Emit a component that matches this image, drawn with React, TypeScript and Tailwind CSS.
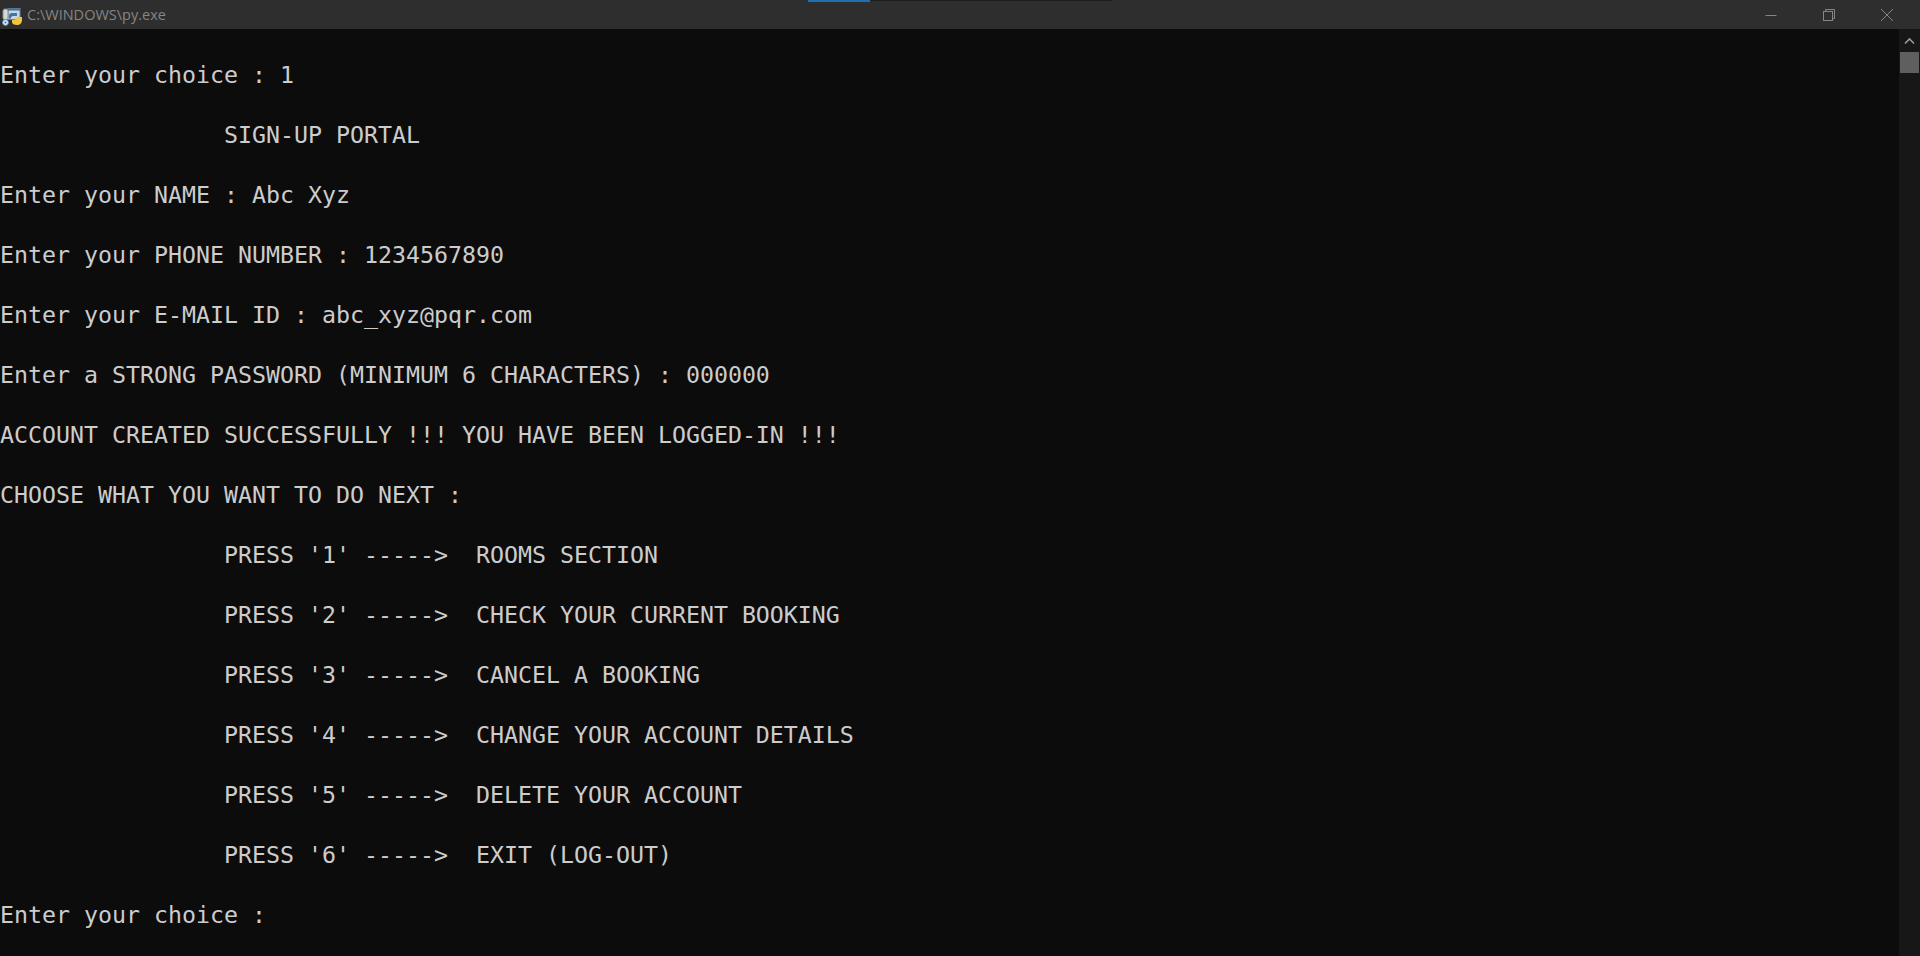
const LINES = [
  "Enter your choice : 1",
  "                SIGN-UP PORTAL",
  "Enter your NAME : Abc Xyz",
  "Enter your PHONE NUMBER : 1234567890",
  "Enter your E-MAIL ID : abc_xyz@pqr.com",
  "Enter a STRONG PASSWORD (MINIMUM 6 CHARACTERS) : 000000",
  "ACCOUNT CREATED SUCCESSFULLY !!! YOU HAVE BEEN LOGGED-IN !!!",
  "CHOOSE WHAT YOU WANT TO DO NEXT :",
  "                PRESS '1' ----->  ROOMS SECTION",
  "                PRESS '2' ----->  CHECK YOUR CURRENT BOOKING",
  "                PRESS '3' ----->  CANCEL A BOOKING",
  "                PRESS '4' ----->  CHANGE YOUR ACCOUNT DETAILS",
  "                PRESS '5' ----->  DELETE YOUR ACCOUNT",
  "                PRESS '6' ----->  EXIT (LOG-OUT)",
  "Enter your choice :",
];

function PyIcon() {
  return (
    <svg width="22" height="22" viewBox="0 0 22 22" className="shrink-0">
      {/* window behind the snake */}
      <rect x="7" y="4.5" width="12" height="11" fill="#c9d6e2" stroke="#6f8296" />
      <rect x="7" y="4.5" width="12" height="2" fill="#3f6f9e" />
      {/* disc / grey figure on the left */}
      <rect x="2" y="5" width="5" height="11" rx="2" fill="#d8d8d8" stroke="#8c8c8c" />
      <circle cx="4.5" cy="18.5" r="3" fill="#e6eef5" stroke="#4a82b0" />
      <circle cx="4.5" cy="18.5" r="1" fill="#2f6ea5" />
      {/* python logo */}
      <path d="M11 9h5v3h-4c-1.500 0-2 1-2 2.500H8V12c0-2 1-3 3-3z" fill="#3b77a8" />
      <path d="M16 13h5v3c0 3-2 5-5 5s-5-1-5-3v-2c2 0 3 0 4-1 .5-.8.5-1.500 1-2z" fill="#f2c53d" />
    </svg>
  );
}

function TitleBar() {
  return (
    <div className="h-[29px] shrink-0 bg-[#2e2e2e] flex items-center relative">
      <div className="flex items-center pl-[1px] gap-[4px] flex-1">
        <PyIcon />
        <span className="text-[#858585] text-[14.5px] font-['Open_Sans',sans-serif]">C:\WINDOWS\py.exe</span>
      </div>
      {/* window buttons */}
      <div className="flex items-center h-full pr-[4px] text-[#858585]">
        <div className="w-[58px] flex justify-center">
          <svg width="14" height="14" viewBox="0 0 14 14"><path d="M1.5 7.5h11" stroke="currentColor" /></svg>
        </div>
        <div className="w-[58px] flex justify-center">
          <svg width="14" height="14" viewBox="0 0 14 14" fill="none" stroke="currentColor"><rect x="1.500" y="3.500" width="9" height="9" /><path d="M3.500 3.500v-2h9v9h-2" /></svg>
        </div>
        <div className="w-[58px] flex justify-center">
          <svg width="14" height="14" viewBox="0 0 14 14" fill="none" stroke="currentColor"><path d="M1 1l12 12M13 1L1 13" /></svg>
        </div>
      </div>
      <div className="absolute top-0 left-[808px] w-[304px] h-px bg-[#1e1e1e]">
        <div className="w-[62px] h-[2px] bg-[#1f6fb5]" />
      </div>
    </div>
  );
}

function ScrollBar() {
  return (
    <div className="w-[21px] shrink-0 bg-[#171717] flex flex-col items-center">
      <div className="h-[23px] w-full flex justify-center items-center">
        <svg width="11" height="8" viewBox="0 0 11 8" fill="none"><path d="M1 6.500l4.500-4.500 4.500 4.500" stroke="#9a9a9a" strokeWidth="1.600" /></svg>
      </div>
      <div className="w-[19px] h-[21px] bg-[#5f5f5f]" />
    </div>
  );
}

export default function App() {
  return (
    <div className="h-[956px] w-[1920px] overflow-hidden flex flex-col bg-[#0c0c0c]">
      <TitleBar />
      <div className="flex flex-1 min-h-0">
        <pre className="flex-1 pt-[31px] font-['DejaVu_Sans_Mono',monospace] text-[23.25px] leading-[30px] text-[#cccccc]">
          {LINES.map((line) => (
            <div key={line} className="h-[60px] whitespace-pre">{line}</div>
          ))}
        </pre>
        <ScrollBar />
      </div>
    </div>
  );
}
